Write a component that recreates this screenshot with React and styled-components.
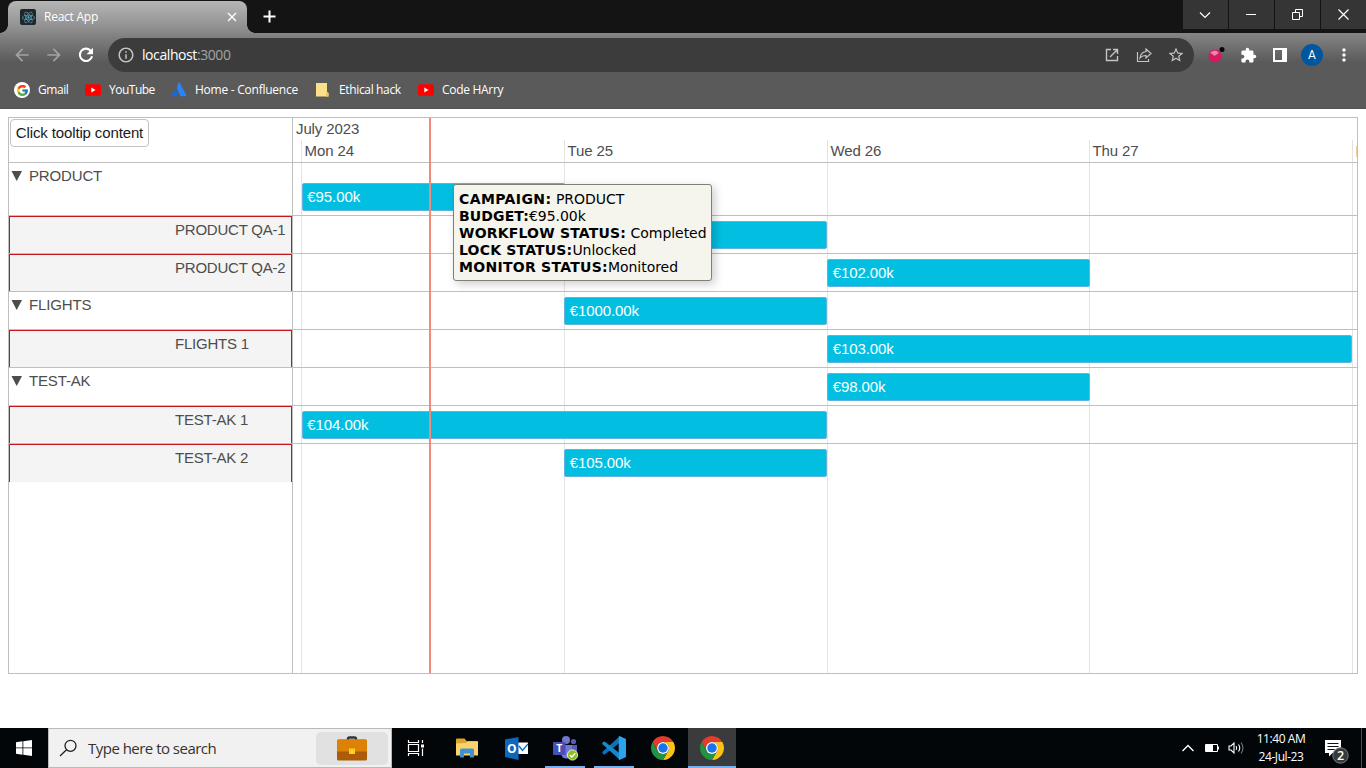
import React from "react";
import styled, { createGlobalStyle } from "styled-components";
import { FcGoogle } from "react-icons/fc";
import { FaReact } from "react-icons/fa";
import {
  MdArrowBack,
  MdArrowForward,
  MdInfoOutline,
  MdStarBorder,
  MdExtension,
  MdMoreVert,
} from "react-icons/md";

const UI = `"Segoe UI", "Open Sans", "Noto Sans", sans-serif`;
const ARIAL = `"Liberation Sans", Arial, sans-serif`;

const GlobalStyle = createGlobalStyle`
  *, *::before, *::after { box-sizing: border-box; }
  html, body { margin: 0; height: 768px; overflow: hidden; background: #fff; }
`;

const Screen = styled.div`
  display: flex;
  flex-direction: column;
  width: 1366px;
  height: 768px;
  background: #fff;
  font-family: ${UI};
`;

/* ---------- Browser ---------- */

const Browser = styled.header`
  flex: none;
  height: 109px;
  color: #fff;
  background: linear-gradient(#868686 0, #5a5a5a 29px, #5a5a5a 75px, #4c4c4c 76px) 0 33px no-repeat;
  background-color: #141414;
`;

const TabStrip = styled.div`
  display: flex;
  height: 33px;
  padding-left: 8px;
`;

const Tab = styled.div`
  position: relative;
  display: flex;
  align-items: center;
  width: 239px;
  margin-top: 1px;
  padding: 0 10px 0 12px;
  border-radius: 8px 8px 0 0;
  background: linear-gradient(#b6b6b6, #888);
  &::before,
  &::after {
    content: "";
    position: absolute;
    bottom: 0;
    width: 8px;
    height: 8px;
  }
  &::before {
    left: -8px;
    background: radial-gradient(circle at 0 0, transparent 7.5px, #8a8a8a 8px);
  }
  &::after {
    right: -8px;
    background: radial-gradient(circle at 100% 0, transparent 7.5px, #8a8a8a 8px);
  }
`;

const ReactBadge = styled.span`
  display: flex;
  align-items: center;
  justify-content: center;
  width: 16px;
  height: 16px;
  border-radius: 2px;
  background: #20272b;
  color: #58b6d0;
`;

const TabTitle = styled.span`
  flex: 1;
  margin-left: 8px;
  font-size: 12px;
  line-height: 16px;
  letter-spacing: -0.25px;
`;

const NewTab = styled.span`
  display: flex;
  align-items: center;
  margin-left: 16px;
`;

const WindowControls = styled.div`
  display: flex;
  gap: 1px;
  height: 29px;
  margin-left: auto;
`;

const WindowButton = styled.span`
  display: flex;
  align-items: center;
  justify-content: center;
  width: 45px;
  padding-right: 1px;
  background: #353535;
`;

const Toolbar = styled.div`
  display: flex;
  align-items: center;
  height: 44px;
  padding-left: 12px;
`;

const NavButton = styled.span`
  display: flex;
  justify-content: center;
  width: 20px;
  margin-right: 12px;
  color: ${(p) => (p.$dim ? "#a3a3a3" : "#fff")};
`;

const AddressBar = styled.div`
  display: flex;
  flex: none;
  align-items: center;
  width: 1086px;
  height: 34px;
  padding: 0 9px;
  border-radius: 17px;
  background: #3c3c3c;
  color: #c4c4c4;
`;

const Url = styled.span`
  flex: 1;
  margin-left: 7px;
  font-size: 14px;
  line-height: 20px;
  letter-spacing: -0.42px;
  color: #a5a5a5;
  b {
    font-weight: 400;
    color: #fff;
  }
`;

const AddressAction = styled.span`
  display: flex;
  justify-content: center;
  width: 18px;
  margin-left: 14px;
`;

const ToolbarActions = styled.div`
  display: flex;
  flex: none;
  align-items: center;
  margin-left: 12px;
`;

const ToolbarItem = styled.span`
  display: flex;
  align-items: center;
  justify-content: center;
  width: 20px;
  margin-right: 12px;
  &:last-child {
    margin-right: 0;
  }
`;

const Avatar = styled.span`
  display: flex;
  align-items: center;
  justify-content: center;
  flex: none;
  width: 22px;
  height: 22px;
  border-radius: 50%;
  background: #02559f;
  font: 12px/22px Roboto, sans-serif;
`;

const Bookmarks = styled.nav`
  display: flex;
  align-items: center;
  height: 26px;
  padding-left: 14px;
`;

const Bookmark = styled.span`
  display: flex;
  align-items: center;
  gap: 8px;
  width: ${(p) => p.$width}px;
  font-size: 12px;
  line-height: 16px;
  letter-spacing: ${(p) => p.$tracking}px;
  white-space: nowrap;
  svg {
    flex: none;
  }
`;

const GoogleDisc = styled.span`
  display: flex;
  align-items: center;
  justify-content: center;
  width: 16px;
  height: 16px;
  border-radius: 50%;
  background: #fff;
`;

/* ---------- Timeline ---------- */

const Page = styled.main`
  flex: 1;
  padding: 8px;
`;

const Timeline = styled.section`
  position: relative;
  display: flex;
  width: 1350px;
  height: 557px;
  border: 1px solid #bfbfbf;
  font-family: ${ARIAL};
  font-size: 15px;
  line-height: 17px;
  color: #4d4d4d;
`;

const Groups = styled.div`
  width: 284px;
  border-right: 1px solid #bfbfbf;
`;

const GroupsHead = styled.div`
  height: 45px;
  padding: 1px;
  border-bottom: 1px solid #bfbfbf;
`;

const TooltipButton = styled.button`
  display: block;
  width: 139px;
  height: 28px;
  padding: 0 0 2px;
  border: 1px solid #c3c3c3;
  border-radius: 4px;
  background: #fff;
  color: #1a1a1a;
  font: 15px/17px ${ARIAL};
  letter-spacing: -0.13px;
  white-space: nowrap;
`;

const GroupRow = styled.div`
  height: ${(p) => p.$height}px;
  border-bottom: ${(p) => (p.$last ? "0" : "1px solid #bfbfbf")};
`;

const ParentLabel = styled.div`
  display: flex;
  align-items: center;
  gap: 7px;
  padding: 4px 0 0 2px;
  letter-spacing: -0.15px;
`;

const ChildLabel = styled.div`
  height: 100%;
  padding: 5px 0 0 166px;
  background: #f4f4f4;
  box-shadow: inset 1px 0 #c4161e, inset -1px 0 #c4161e, inset 0 1px #c4161e;
  letter-spacing: -0.22px;
`;

const Chart = styled.div`
  position: relative;
  display: grid;
  grid-template-rows: 100%;
  width: 1064px;
  overflow: hidden;
`;

const DayGrid = styled.div`
  grid-area: 1 / 1;
  display: grid;
  grid-template-columns: 8px 263px 263px 262px 263px 5px;
  grid-template-rows: 22px 1fr;
`;

const Month = styled.div`
  grid-column: 1 / -1;
  padding: 2px 0 0 3px;
  letter-spacing: -0.12px;
`;

const Day = styled.div`
  padding: 2px 0 0 2.5px;
  border-left: ${(p) => (p.$first ? "0" : "1px solid #e3e3e3")};
  white-space: nowrap;
  letter-spacing: -0.1px;
  &:last-child {
    padding-left: 3px;
  }
  &:last-child::after {
    content: "";
    display: block;
    width: 1px;
    height: 11px;
    margin-top: 4px;
    background: #efcf98;
  }
`;

const Rows = styled.div`
  grid-area: 1 / 1;
  z-index: 1;
  padding-top: 44px;
  &::before {
    content: "";
    display: block;
    height: 1px;
    background: #bfbfbf;
  }
`;

const ItemRow = styled.div`
  display: flex;
  align-items: flex-end;
  height: ${(p) => p.$height}px;
  padding-bottom: ${(p) => (p.$last ? 5 : 4)}px;
  border-bottom: ${(p) => (p.$last ? "0" : "1px solid #bfbfbf")};
`;

const Item = styled.div`
  width: ${(p) => p.$width}px;
  height: 28px;
  margin-left: ${(p) => p.$start}px;
  padding: 4px 4.7px;
  border: 1px solid #62b3e2;
  border-radius: 2px;
  background: #02bfe1;
  color: #fff;
  line-height: 17px;
  letter-spacing: -0.08px;
`;

const NowLine = styled.div`
  position: absolute;
  z-index: 2;
  top: 0;
  bottom: 0;
  left: 136px;
  width: 2px;
  background: #f3897b;
`;

const Tooltip = styled.div`
  position: absolute;
  z-index: 3;
  top: 66px;
  left: 444px;
  width: 259px;
  height: 97px;
  padding: 5.5px 5px;
  border: 1px solid #808074;
  border-radius: 3px;
  background: #f5f4ed;
  box-shadow: 3px 3px 10px rgba(0, 0, 0, 0.2);
  color: #000;
  font: 14px/17px Verdana, "DejaVu Sans", sans-serif;
  letter-spacing: -0.04px;
  white-space: nowrap;
`;

const DetailName = styled.b`
  letter-spacing: ${(p) => p.$tracking}px;
`;

/* ---------- Taskbar ---------- */

const Taskbar = styled.footer`
  display: flex;
  flex: none;
  height: 40px;
  background: #020609;
  color: #fff;
`;

const Start = styled.span`
  display: flex;
  align-items: center;
  justify-content: center;
  width: 48px;
`;

const Search = styled.div`
  display: flex;
  align-items: center;
  width: 344px;
  padding: 0 3px 0 10px;
  border: 1px solid #b9b9b9;
  background: #f1f1f1;
  color: #333;
  font-size: 15px;
  letter-spacing: -0.52px;
`;

const SearchText = styled.span`
  flex: 1;
  margin-left: 11px;
`;

const Highlight = styled.span`
  display: flex;
  align-items: center;
  justify-content: center;
  width: 72px;
  height: 33px;
  border-radius: 5px;
  background: #e1e1e1;
`;

const TaskButton = styled.span`
  display: flex;
  align-items: center;
  justify-content: center;
  width: 48px;
  margin-right: ${(p) => p.$gap ?? 1}px;
  background: ${(p) => (p.$active ? "#393b3d" : "transparent")};
  box-shadow: ${(p) => (p.$active ? "inset 0 -2px #76b0ee" : "none")};
  ${(p) =>
    p.$running &&
    `background: linear-gradient(#76b0ee, #76b0ee) center bottom / 40px 2px no-repeat;`}
`;

const Tray = styled.div`
  display: flex;
  align-items: center;
  margin-left: auto;
`;

const TrayIcon = styled.span`
  display: flex;
  justify-content: center;
  width: 24px;
`;

const Clock = styled.div`
  width: 66px;
  font-size: 12px;
  line-height: 18px;
  letter-spacing: -0.42px;
  text-align: center;
`;

const Notifications = styled.span`
  display: flex;
  width: 48px;
  height: 40px;
  padding-left: 8px;
  border-right: 1px solid #4b4e50;
  margin-right: 4px;
`;

/* ---------- Drawings ---------- */

const YouTube = () => (
  <svg width="16" height="16" viewBox="0 0 16 16">
    <rect y="2.2" width="16" height="11.6" rx="2" fill="#f00" />
    <path d="M6.3 5.5v5l4.2-2.5z" fill="#fff" />
  </svg>
);

const Atlassian = () => (
  <svg width="16" height="16" viewBox="0 0 16 16">
    <path d="M4.6 7.3c1.8 2 2.2 4.5 1 7L.9 14.2q-1 0-.6-1z" fill="#1868db" />
    <path d="M7.6.8c-2 3.5-1.7 6 0 9.3l2 4.2h5.1q1-.2.6-1.1L8.8 1Q8.2 0 7.6.8z" fill="#2684ff" />
  </svg>
);

const FolderNote = () => (
  <svg width="16" height="16" viewBox="0 0 16 16">
    <path d="M1 1h11v9l1.5 1v3.5H1z" fill="#fbdf8b" />
    <path d="M11 10l2.5 1v3.5H11z" fill="#eec867" />
  </svg>
);

const Chrome = () => (
  <svg width="24" height="24" viewBox="2 2 44 44">
    <path d="M43.05 13A22 22 0 0 0 4.95 13L14.47 29.5A11 11 0 0 1 24 13z" fill="#e33b2e" />
    <path d="M43.05 13A22 22 0 0 1 24 46L33.53 29.5A11 11 0 0 0 24 13z" fill="#fbc116" />
    <path d="M24 46A22 22 0 0 1 4.95 13L14.47 29.5A11 11 0 0 0 33.53 29.5z" fill="#229342" />
    <circle cx="24" cy="24" r="11" fill="#fff" />
    <circle cx="24" cy="24" r="8.7" fill="#1a73e8" />
  </svg>
);

const Reload = () => (
  <svg width="16" height="16" viewBox="0 0 16 16">
    <path d="M13.2 4.3A6.2 6.2 0 1 0 14.1 9.300" fill="none" stroke="#fff" strokeWidth="2.1" />
    <path d="M15 .8v6.4H8.600z" fill="#fff" />
  </svg>
);

const Windows = () => (
  <svg width="16" height="16" viewBox="0 0 16 16" fill="#fff">
    <path d="M0 2.2L6.5 1.3V7.5H0zM7.3 1.2L16 0V7.5H7.3zM0 8.3H6.5V14.7L0 13.8zM7.3 8.3H16V16L7.3 14.8z" />
  </svg>
);

const Briefcase = () => (
  <svg width="30" height="25" viewBox="0 0 30 25">
    <path d="M11 4V2.8Q11 1.5 12.5 1.5h5Q19 1.5 19 2.8V4" fill="none" stroke="#333" strokeWidth="2.4" />
    <rect y="3.5" width="30" height="21" rx="1.5" fill="#ac5c08" />
    <path d="M0 5Q0 3.5 1.5 3.5h27Q30 3.5 30 5V15.5H0z" fill="#dc8307" />
    <rect x="12" y="12.5" width="6" height="5.5" fill="#ffce22" />
  </svg>
);

const TaskView = () => (
  <svg width="18" height="16" viewBox="0 0 18 16" fill="none" stroke="#fff" strokeWidth="1.2">
    <path d="M1.5 0v2.5h10V0M1.5 16v-2.5h10V16M1.5 4.5h10v7h-10zM15.5 0v3M15.5 8.5V16" />
    <path d="M14 4.5h3v3h-3z" fill="#fff" stroke="none" />
  </svg>
);

const Explorer = () => (
  <svg width="22" height="20" viewBox="0 0 22 20">
    <path d="M0 1.5Q0 .5 1 .5h7.5l2 2.5H21q1 0 1 1v13H0z" fill="#e0a22f" />
    <path d="M0 5.5l10-.5 2-1.5h10V17.5H0z" fill="#fcd36b" />
    <path d="M4 19.5V12q0-1.5 1.5-1.5h11Q18 10.5 18 12v7.5h-4V15.500H8v4z" fill="#4190cf" />
  </svg>
);

const Outlook = () => (
  <svg width="23" height="23" viewBox="0 0 23 23">
    <path d="M12 5.5h11v11.5H12z" fill="#fff" />
    <path d="M14 9l3.5 4.5L23 7" fill="none" stroke="#0c6ec3" strokeWidth="1.4" />
    <path d="M0 2.5L13.5 0v23L0 20z" fill="#0b69bd" />
    <text x="6.8" y="15.6" textAnchor="middle" fontSize="12" fontWeight="700" fontFamily="Open Sans" fill="#fff">O</text>
  </svg>
);

const Teams = () => (
  <svg width="26" height="26" viewBox="0 0 26 26">
    <circle cx="14" cy="5" r="4" fill="#7177ce" />
    <circle cx="21.5" cy="6.5" r="2.6" fill="#555cbc" />
    <path d="M17 10h8v8q-2 4-6 3z" fill="#555cbc" />
    <path d="M9 10h11v9q-1 4.5-5.5 4.5T9 19z" fill="#7479d5" />
    <rect x="1" y="7" width="12.5" height="13" rx="1" fill="#474fb4" />
    <text x="7.3" y="17.3" textAnchor="middle" fontSize="10.5" fontWeight="700" fontFamily="Open Sans" fill="#fff">T</text>
    <circle cx="20.5" cy="20" r="5.1" fill="#8dbd1e" stroke="#fff" strokeWidth=".8" />
    <path d="M17.8 20l2 2 3.5-3.7" fill="none" stroke="#fff" strokeWidth="1.3" />
  </svg>
);

const VSCode = () => (
  <svg width="24" height="24" viewBox="0 0 24 24">
    <path d="M18 0v6.5L3 18.2q-.7.5-1.4 0L.5 17.2q-.7-.7 0-1.5z" fill="#0b72b9" />
    <path d="M18 24v-6.5L3 5.8q-.7-.5-1.4 0L.5 6.8q-.7.7 0 1.5z" fill="#1288cf" />
    <path d="M17.5 0L24 3v18l-6.5 3q-.8-.3-.8-1.5v-21Q16.7.3 17.5 0z" fill="#2ba4ed" />
  </svg>
);

const SpeechBubble = () => (
  <svg width="28" height="40" viewBox="0 0 28 40">
    <path d="M3 12h16v13h-8.5L7 28.5V25H3z" fill="#fff" />
    <path d="M5.5 15.5h11M5.5 18.5h11M5.5 21.5h7" stroke="#111" strokeWidth="1.1" />
    <circle cx="18.5" cy="27.5" r="7.7" fill="#373a3c" stroke="#7c7e80" />
    <text x="18.5" y="32" textAnchor="middle" fontSize="12.5" fontWeight="600" fontFamily="Open Sans" fill="#fff">2</text>
  </svg>
);

const Line = ({ w, h, d, color = "#fff", weight = 1.2 }) => (
  <svg width={w} height={h} viewBox={`0 0 ${w} ${h}`} fill="none" stroke={color} strokeWidth={weight}>
    <path d={d} />
  </svg>
);

/* ---------- Data ---------- */

const rows = [
  { label: "PRODUCT", parent: true, height: 53, start: 8.6, width: 263, budget: "€95.00k" },
  { label: "PRODUCT QA-1", height: 38, start: 271, width: 263, budget: "" },
  { label: "PRODUCT QA-2", height: 38, start: 534, width: 263, budget: "€102.00k" },
  { label: "FLIGHTS", parent: true, height: 38, start: 271, width: 263, budget: "€1000.00k" },
  { label: "FLIGHTS 1", height: 38, start: 534, width: 525, budget: "€103.00k" },
  { label: "TEST-AK", parent: true, height: 38, start: 534, width: 263, budget: "€98.00k" },
  { label: "TEST-AK 1", height: 38, start: 8.6, width: 525, budget: "€104.00k" },
  { label: "TEST-AK 2", height: 38, start: 271, width: 263, budget: "€105.00k" },
];

const days = ["", "Mon 24", "Tue 25", "Wed 26", "Thu 27", ""];

const details = [
  { name: "CAMPAIGN:", value: " PRODUCT", tracking: 0.4 },
  { name: "BUDGET:", value: "€95.00k", tracking: 0.12 },
  { name: "WORKFLOW STATUS:", value: " Completed", tracking: 0.19 },
  { name: "LOCK STATUS:", value: "Unlocked", tracking: 0.18 },
  { name: "MONITOR STATUS:", value: "Monitored", tracking: 0.28 },
];

export default function App() {
  const last = rows.length - 1;
  return (
    <Screen>
      <GlobalStyle />
      <Browser>
        <TabStrip>
          <Tab>
            <ReactBadge><FaReact size={13} /></ReactBadge>
            <TabTitle>React App</TabTitle>
            <Line w={10} h={10} d="M1 1l8 8M9 1L1 9" weight={1.4} />
          </Tab>
          <NewTab><Line w={13} h={13} d="M6.5 .5v12M.5 6.5h12" weight={2} /></NewTab>
          <WindowControls>
            <WindowButton><Line w={12} h={12} d="M1 3.5l5 5 5-5" weight={1.2} /></WindowButton>
            <WindowButton><Line w={10} h={11} d="M0 5.5h10" weight={1} /></WindowButton>
            <WindowButton><Line w={11} h={11} d="M.5 3.5h7v7h-7zM3.5 3V.5h7v7H8" weight={1} /></WindowButton>
            <WindowButton><Line w={11} h={11} d="M.5 .5l10 10M10.5 .5l-10 10" /></WindowButton>
          </WindowControls>
        </TabStrip>
        <Toolbar>
          <NavButton $dim><MdArrowBack size={20} /></NavButton>
          <NavButton $dim><MdArrowForward size={20} /></NavButton>
          <NavButton><Reload /></NavButton>
          <AddressBar>
            <MdInfoOutline size={18} />
            <Url><b>localhost</b>:3000</Url>
            <AddressAction>
              <Line w={14} h={14} d="M6 1.5H1.5v11h11V8M8 1.5h4.5V6M12.5 1.5L5 9" color="#c4c4c4" weight={1.4} />
            </AddressAction>
            <AddressAction>
              <Line w={16} h={16} d="M1.5 5v9.5h11V12M10 2l5 4.5-5 4.5V8.5Q6 8.5 4 11q.5-5.5 6-6.5z" color="#c4c4c4" weight={1.2} />
            </AddressAction>
            <AddressAction><MdStarBorder size={18} /></AddressAction>
          </AddressBar>
          <ToolbarActions>
            <ToolbarItem>
              <svg width="18" height="20" viewBox="0 0 18 20">
                <circle cx="8" cy="11" r="6.5" fill="#d41a62" />
                <path d="M3 8q5-5 9 0-2 1-4.5 3Q5 8.5 3 8z" fill="#ee83a7" />
                <circle cx="15" cy="4.5" r="2.5" fill="#050505" />
              </svg>
            </ToolbarItem>
            <ToolbarItem><MdExtension size={17} /></ToolbarItem>
            <ToolbarItem>
              <svg width="14" height="14" viewBox="0 0 14 14">
                <path d="M0 0h14v14H0zM2 2v10h7V2z" fill="#fff" fillRule="evenodd" />
              </svg>
            </ToolbarItem>
            <ToolbarItem><Avatar>A</Avatar></ToolbarItem>
            <ToolbarItem><MdMoreVert size={20} /></ToolbarItem>
          </ToolbarActions>
        </Toolbar>
        <Bookmarks>
          <Bookmark $width={71} $tracking={-0.45}><GoogleDisc><FcGoogle size={13} /></GoogleDisc>Gmail</Bookmark>
          <Bookmark $width={86} $tracking={-0.5}><YouTube />YouTube</Bookmark>
          <Bookmark $width={144} $tracking={-0.25}><Atlassian />Home - Confluence</Bookmark>
          <Bookmark $width={103} $tracking={-0.35}><FolderNote />Ethical hack</Bookmark>
          <Bookmark $width={100} $tracking={-0.3}><YouTube />Code HArry</Bookmark>
        </Bookmarks>
      </Browser>

      <Page>
        <Timeline>
          <Groups>
            <GroupsHead><TooltipButton>Click tooltip content</TooltipButton></GroupsHead>
            {rows.map((row, i) => (
              <GroupRow key={row.label} $height={row.height} $last={i === last}>
                {row.parent ? (
                  <ParentLabel>
                    <svg width="11" height="10" viewBox="0 0 11 10"><path d="M.5 0h10.500L5.700 10z" fill="#4d4d4d" /></svg>
                    {row.label}
                  </ParentLabel>
                ) : (
                  <ChildLabel>{row.label}</ChildLabel>
                )}
              </GroupRow>
            ))}
          </Groups>
          <Chart>
            <DayGrid>
              <Month>July 2023</Month>
              {days.map((day, i) => <Day key={i} $first={i === 0}>{day}</Day>)}
            </DayGrid>
            <Rows>
              {rows.map((row, i) => (
                <ItemRow key={row.label} $height={row.height} $last={i === last}>
                  <Item $start={row.start} $width={row.width}>{row.budget}</Item>
                </ItemRow>
              ))}
            </Rows>
            <NowLine />
          </Chart>
          <Tooltip>
            {details.map(({ name, value, tracking }) => (
              <div key={name}><DetailName $tracking={tracking}>{name}</DetailName>{value}</div>
            ))}
          </Tooltip>
        </Timeline>
      </Page>

      <Taskbar>
        <Start><Windows /></Start>
        <Search>
          <Line w={18} h={18} d="M17 6.8a5.5 5.5 0 1 1-11 0a5.5 5.5 0 1 1 11 0M7.5 10.8L1 17" color="#222" weight={1.3} />
          <SearchText>Type here to search</SearchText>
          <Highlight><Briefcase /></Highlight>
        </Search>
        <TaskButton $gap={3}><TaskView /></TaskButton>
        <TaskButton><Explorer /></TaskButton>
        <TaskButton><Outlook /></TaskButton>
        <TaskButton $running><Teams /></TaskButton>
        <TaskButton $running><VSCode /></TaskButton>
        <TaskButton><Chrome /></TaskButton>
        <TaskButton $active><Chrome /></TaskButton>
        <Tray>
          <TrayIcon><Line w={12} h={8} d="M.5 7L6 1.5 11.5 7" weight={1.4} /></TrayIcon>
          <TrayIcon>
            <svg width="14" height="8" viewBox="0 0 14 8">
              <path d="M.5 .5h12v7H.5z" fill="none" stroke="#fff" />
              <path d="M1 1h7v6H1zM12.5 2.500H14v3h-1.500z" fill="#fff" />
            </svg>
          </TrayIcon>
          <TrayIcon>
            <svg width="17" height="14" viewBox="0 0 17 14" fill="none" stroke="#fff" strokeWidth="1.1">
              <path d="M1 5h2l3-3v10L3 9H1zM8 5q1.5 2 0 4M10.5 3.5q2.5 3.5 0 7" />
              <path d="M13 1.5q4 5.5 0 11" stroke="#777" />
            </svg>
          </TrayIcon>
          <Clock>11:40 AM<br />24-Jul-23</Clock>
          <Notifications><SpeechBubble /></Notifications>
        </Tray>
      </Taskbar>
    </Screen>
  );
}
